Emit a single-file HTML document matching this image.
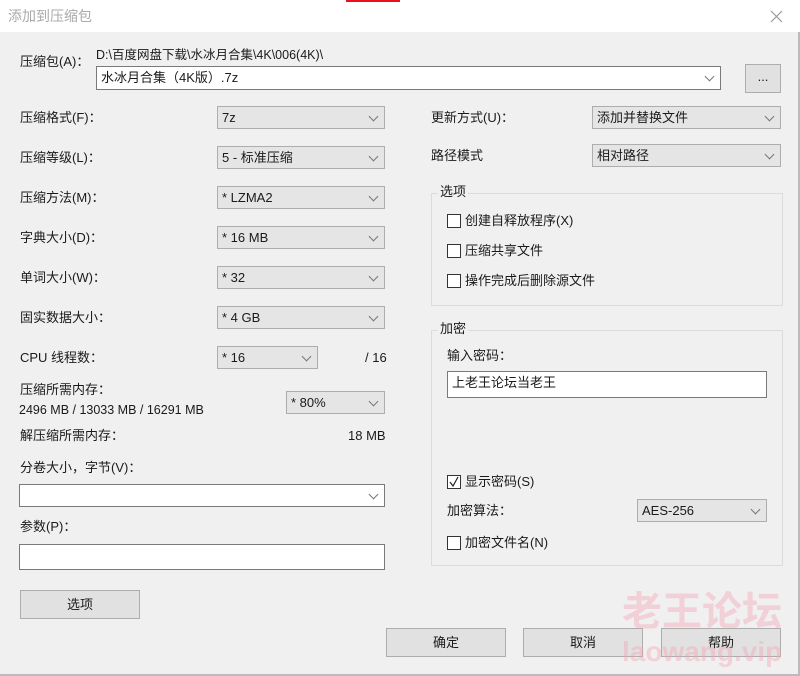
<!DOCTYPE html>
<html><head><meta charset="utf-8"><style>
*{box-sizing:border-box;margin:0;padding:0}
body{width:800px;height:676px;background:#f0f0f0;position:relative;overflow:hidden;font-family:"Liberation Sans","Noto Sans CJK SC",sans-serif;font-size:13px;color:#1a1a1a}
.a{position:absolute;white-space:nowrap}
.t{position:absolute;white-space:nowrap;line-height:16px}
.dd{position:absolute;background:#e5e5e5;border:1px solid #adadad;height:23px;line-height:21px;padding-left:4px}
.dd:after,.cb:after{content:"";position:absolute;right:7px;top:6px;width:6px;height:6px;border-right:1px solid #777;border-bottom:1px solid #777;transform:rotate(45deg)}
.cb{position:absolute;background:#fff;border:1px solid #7a7a7a;height:23px;line-height:21px;padding-left:4px}
.in{position:absolute;background:#fff;border:1px solid #7a7a7a;line-height:22px;padding-left:4px}
.btn{position:absolute;background:#e1e1e1;border:1px solid #adadad;text-align:center}
.grp{position:absolute;border:1px solid #dcdcdc}
.gl{position:absolute;background:#f0f0f0;padding:0 2px;line-height:16px}
.ck{position:absolute;width:14px;height:14px;border:1px solid #333;background:#fff}
.wm{position:absolute;white-space:nowrap;color:rgba(245,160,180,0.4);font-weight:bold}
</style></head><body>
<div class="a" style="left:0;top:0;width:800px;height:32px;background:#fff"></div>
<div class="a" style="left:346px;top:0;width:54px;height:2px;background:#e81123"></div>
<div class="t" style="left:8px;top:8px;color:#aaa;font-size:14px">添加到压缩包</div>
<svg class="a" style="left:770px;top:10px" width="13" height="13"><path d="M1 1L12 12M12 1L1 12" stroke="#999" stroke-width="1.2"/></svg>
<div class="a" style="left:798px;top:32px;width:2px;height:644px;background:#bbb"></div>
<div class="a" style="left:0;top:674px;width:800px;height:2px;background:#bbb"></div>

<div class="t" style="left:20px;top:54px">压缩包(A)：</div>
<div class="t" style="left:96px;top:47px;font-size:12.5px">D:\百度网盘下载\水冰月合集\4K\006(4K)\</div>
<div class="cb" style="left:96px;top:66px;width:625px;height:24px;line-height:22px">水冰月合集（4K版）.7z</div>
<div class="btn" style="left:745px;top:64px;width:36px;height:29px;line-height:24px">...</div>

<div class="t" style="left:20px;top:110px">压缩格式(F)：</div><div class="dd" style="left:217px;top:106px;width:168px">7z</div>
<div class="t" style="left:20px;top:150px">压缩等级(L)：</div><div class="dd" style="left:217px;top:146px;width:168px">5 - 标准压缩</div>
<div class="t" style="left:20px;top:190px">压缩方法(M)：</div><div class="dd" style="left:217px;top:186px;width:168px">* LZMA2</div>
<div class="t" style="left:20px;top:230px">字典大小(D)：</div><div class="dd" style="left:217px;top:226px;width:168px">* 16 MB</div>
<div class="t" style="left:20px;top:270px">单词大小(W)：</div><div class="dd" style="left:217px;top:266px;width:168px">* 32</div>
<div class="t" style="left:20px;top:310px">固实数据大小：</div><div class="dd" style="left:217px;top:306px;width:168px">* 4 GB</div>
<div class="t" style="left:20px;top:350px">CPU 线程数：</div><div class="dd" style="left:217px;top:346px;width:101px">* 16</div>
<div class="t" style="left:365px;top:350px">/ 16</div>
<div class="t" style="left:20px;top:382px">压缩所需内存：</div>
<div class="t" style="left:19px;top:402px;font-size:12.5px">2496 MB / 13033 MB / 16291 MB</div>
<div class="dd" style="left:286px;top:391px;width:99px">* 80%</div>
<div class="t" style="left:20px;top:428px">解压缩所需内存：</div>
<div class="t" style="left:348px;top:428px">18 MB</div>
<div class="t" style="left:20px;top:460px">分卷大小，字节(V)：</div>
<div class="cb" style="left:19px;top:484px;width:366px">&nbsp;</div>
<div class="t" style="left:20px;top:519px">参数(P)：</div>
<div class="in" style="left:19px;top:544px;width:366px;height:26px"></div>
<div class="btn" style="left:20px;top:590px;width:120px;height:29px;line-height:27px">选项</div>

<div class="t" style="left:431px;top:110px">更新方式(U)：</div><div class="dd" style="left:592px;top:106px;width:189px">添加并替换文件</div>
<div class="t" style="left:431px;top:148px">路径模式</div><div class="dd" style="left:592px;top:144px;width:189px">相对路径</div>

<div class="grp" style="left:431px;top:193px;width:352px;height:113px"></div>
<div class="gl" style="left:438px;top:184px">选项</div>
<div class="ck" style="left:447px;top:214px"></div><div class="t" style="left:465px;top:213px">创建自释放程序(X)</div>
<div class="ck" style="left:447px;top:244px"></div><div class="t" style="left:465px;top:243px">压缩共享文件</div>
<div class="ck" style="left:447px;top:274px"></div><div class="t" style="left:465px;top:273px">操作完成后删除源文件</div>

<div class="grp" style="left:431px;top:330px;width:352px;height:236px"></div>
<div class="gl" style="left:438px;top:321px">加密</div>
<div class="t" style="left:447px;top:348px">输入密码：</div>
<div class="in" style="left:447px;top:371px;width:320px;height:27px">上老王论坛当老王</div>
<div class="ck" style="left:447px;top:475px"></div><svg class="a" style="left:448px;top:476px" width="12" height="12"><path d="M2 6L5 10L10 1" stroke="#222" fill="none" stroke-width="1.2"/></svg><div class="t" style="left:465px;top:474px">显示密码(S)</div>
<div class="t" style="left:447px;top:503px">加密算法：</div><div class="dd" style="left:637px;top:499px;width:130px">AES-256</div>
<div class="ck" style="left:447px;top:536px"></div><div class="t" style="left:465px;top:535px">加密文件名(N)</div>

<div class="btn" style="left:386px;top:628px;width:120px;height:29px;line-height:27px">确定</div>
<div class="btn" style="left:523px;top:628px;width:120px;height:29px;line-height:27px">取消</div>
<div class="btn" style="left:661px;top:628px;width:120px;height:29px;line-height:27px">帮助</div>
<div class="wm" style="left:622px;top:590px;font-size:40px;line-height:44px">老王论坛</div>
<div class="wm" style="left:622px;top:636px;font-size:28px;line-height:32px">laowang.vip</div>
</body></html>
